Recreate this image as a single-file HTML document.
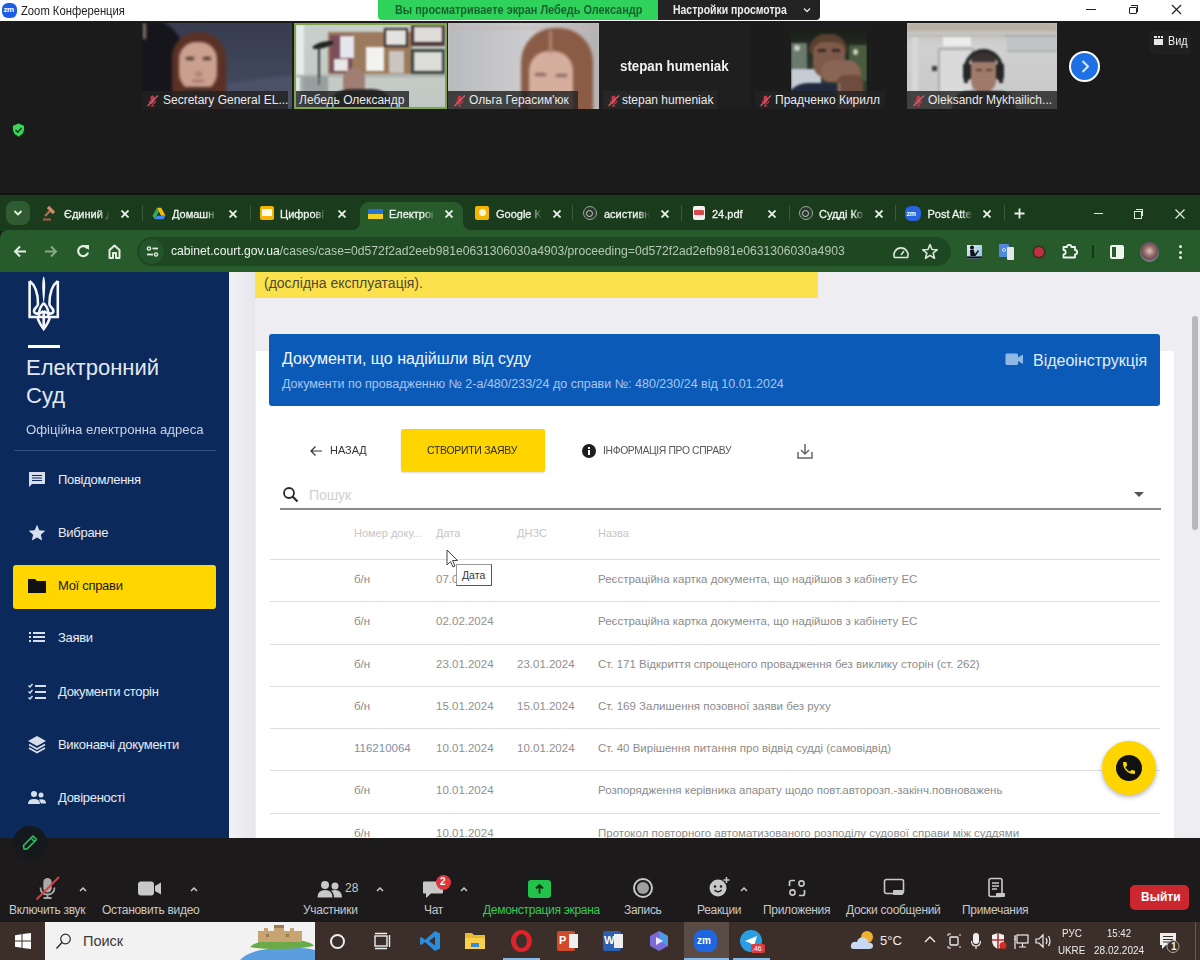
<!DOCTYPE html>
<html><head><meta charset="utf-8">
<style>
*{margin:0;padding:0;box-sizing:border-box}
html,body{width:1200px;height:960px;overflow:hidden;background:#1b1b1b;font-family:"Liberation Sans",sans-serif;position:relative}
.a{position:absolute}
.t{position:absolute;white-space:nowrap;line-height:1}
</style></head><body>

<!-- ===== Zoom title bar ===== -->
<div class="a" style="left:0;top:0;width:1200px;height:21px;background:#fff"></div>
<div class="a" style="left:2px;top:2.5px;width:15px;height:15px;border-radius:6px;background:#1c5ee6"></div>
<div class="t" style="left:3.5px;top:6px;font-size:8px;color:#fff;font-weight:bold;letter-spacing:-.5px">zm</div>
<div class="t" style="left:21px;top:5px;font-size:12px;color:#222;transform:scaleX(.937);transform-origin:0 0">Zoom Конференция</div>
<div class="a" style="left:378px;top:0;width:280px;height:20px;background:#2fd35b;border-radius:0 0 0 4px"></div>
<div class="t" style="left:395px;top:4px;font-size:12px;color:#17622f;font-weight:bold;transform:scaleX(.908);transform-origin:0 0">Вы просматриваете экран Лебедь Олександр</div>
<div class="a" style="left:658px;top:0;width:162px;height:20px;background:#232323;border-radius:0 0 4px 0"></div>
<div class="t" style="left:673px;top:4px;font-size:12px;color:#eee;font-weight:bold;transform:scaleX(.87);transform-origin:0 0">Настройки просмотра</div>
<svg class="a" style="left:802px;top:6px" width="10" height="8" viewBox="0 0 10 8"><path d="M2 2.5 L5 5.5 L8 2.5" fill="none" stroke="#ddd" stroke-width="1.4"/></svg>
<div class="a" style="left:1086px;top:9px;width:10px;height:1.3px;background:#222"></div>
<div class="a" style="left:1131px;top:5px;width:7px;height:7px;border-top:1.2px solid #222;border-right:1.2px solid #222;border-radius:0 1px 0 0"></div>
<div class="a" style="left:1129px;top:6.5px;width:7.5px;height:7.5px;border:1.2px solid #222;background:#fff;border-radius:1px"></div>
<svg class="a" style="left:1171px;top:4px" width="11" height="11" viewBox="0 0 11 11"><path d="M1 1 L10 10 M10 1 L1 10" stroke="#222" stroke-width="1.2"/></svg>

<!-- ===== Video tiles ===== -->
<!-- tile1 -->
<div class="a" style="left:142px;top:23px;width:150px;height:86px;overflow:hidden;background:#3d4357">
  <div class="a" style="left:0;top:0;width:150px;height:86px;filter:blur(1.5px)">
    <div class="a" style="left:0;top:0;width:150px;height:86px;background:linear-gradient(180deg,#363b4e 0%,#3f4558 50%,#454b5e 100%)"></div>
    <div class="a" style="left:80px;top:56px;width:72px;height:32px;background:#4b5166;transform:skewY(-8deg)"></div>
    <div class="a" style="left:-4px;top:-4px;width:46px;height:96px;background:#16151b;border-radius:0 36px 0 0"></div>
    <div class="a" style="left:1px;top:0;width:3px;height:16px;background:#8a7a70"></div>
    <div class="a" style="left:30px;top:9px;width:54px;height:80px;background:#5a3125;border-radius:26px 26px 6px 6px"></div>
    <div class="a" style="left:37px;top:19px;width:38px;height:50px;background:#cba08e;border-radius:17px 17px 19px 19px"></div>
    <div class="a" style="left:43px;top:64px;width:28px;height:24px;background:#4a2e28"></div>
    <div class="a" style="left:44px;top:34px;width:8px;height:3px;background:#4a3430"></div>
    <div class="a" style="left:61px;top:34px;width:8px;height:3px;background:#4a3430"></div>
    <div class="a" style="left:53px;top:48px;width:7px;height:6px;background:#b08474;border-radius:3px"></div>
    <div class="a" style="left:50px;top:57px;width:12px;height:2px;background:#a06a60"></div>
  </div>
</div>
<!-- tile2 -->
<div class="a" style="left:294px;top:23px;width:153px;height:86px;overflow:hidden;background:#c4ccc8;border:2px solid #82a54a">
  <div class="a" style="left:0;top:0;width:151px;height:84px;filter:blur(1px)">
    <div class="a" style="left:0;top:0;width:151px;height:84px;background:linear-gradient(180deg,#c8d0cc,#c0c8c4)"></div>
    <div class="a" style="left:0;top:0;width:8px;height:84px;background:#e6ecec"></div>
    <div class="a" style="left:32px;top:7px;width:84px;height:42px;background:#9c7a5c"></div>
    <div class="a" style="left:34px;top:10px;width:22px;height:38px;background:#7a4e5a"></div>
    <div class="a" style="left:44px;top:11px;width:14px;height:22px;background:#e6e6ee"></div>
    <div class="a" style="left:38px;top:34px;width:14px;height:12px;background:#e8e8e8"></div>
    <div class="a" style="left:70px;top:22px;width:18px;height:24px;background:#f2f2f0"></div>
    <div class="a" style="left:88px;top:3px;width:24px;height:19px;background:#332e2e"></div>
    <div class="a" style="left:90px;top:5px;width:20px;height:15px;background:#e4e2de"></div>
    <div class="a" style="left:115px;top:0;width:34px;height:21px;background:#4a3636"></div>
    <div class="a" style="left:118px;top:2px;width:28px;height:15px;background:#dedcd8"></div>
    <div class="a" style="left:115px;top:24px;width:34px;height:25px;background:#3c463e"></div>
    <div class="a" style="left:118px;top:27px;width:28px;height:19px;background:#dcdcd8"></div>
    <div class="a" style="left:93px;top:26px;width:15px;height:22px;background:#cac6be"></div>
    <div class="a" style="left:0;top:50px;width:151px;height:2px;background:#a8aca8"></div>
    <div class="a" style="left:16px;top:17px;width:22px;height:6px;background:#222;border-radius:50%;transform:rotate(-15deg)"></div>
    <div class="a" style="left:22px;top:22px;width:2px;height:38px;background:#333"></div>
    <div class="a" style="left:47px;top:43px;width:22px;height:26px;background:#a07e72;border-radius:11px 11px 8px 8px"></div>
    <div class="a" style="left:30px;top:64px;width:70px;height:24px;background:#2e2b2c;border-radius:24px 24px 0 0"></div>
    <div class="a" style="left:4px;top:52px;width:28px;height:30px;background:#7a8484;opacity:.6"></div>
  </div>
</div>
<!-- tile3 -->
<div class="a" style="left:448px;top:23px;width:151px;height:86px;overflow:hidden;background:#c4c4c6">
  <div class="a" style="left:0;top:0;width:151px;height:86px;filter:blur(1.5px)">
    <div class="a" style="left:0;top:0;width:151px;height:86px;background:linear-gradient(90deg,#b9babd,#cdcdcf 55%,#b4b0b0)"></div>
    <div class="a" style="left:0;top:4px;width:151px;height:2px;background:#c8b2b6"></div>
    <div class="a" style="left:73px;top:5px;width:72px;height:86px;background:#8a5c46;border-radius:34px 34px 0 0"></div>
    <div class="a" style="left:81px;top:28px;width:44px;height:60px;background:#d6ae9e;border-radius:20px 20px 0 0"></div>
    <div class="a" style="left:101px;top:8px;width:3px;height:22px;background:#b08470"></div>
    <div class="a" style="left:87px;top:50px;width:11px;height:3px;background:#8a6460"></div>
    <div class="a" style="left:108px;top:51px;width:11px;height:3px;background:#8a6460"></div>
  </div>
</div>
<!-- tile4 -->
<div class="a" style="left:599px;top:23px;width:152px;height:86px;background:#1f1f1f"></div>
<div class="t" style="left:620px;top:59px;font-size:14px;font-weight:bold;color:#f2f2f2;transform:scaleX(.95);transform-origin:0 0">stepan humeniak</div>
<!-- tile5 -->
<div class="a" style="left:752px;top:23px;width:153px;height:86px;background:#1c1c1c"></div>
<div class="a" style="left:791px;top:29px;width:76px;height:80px;overflow:hidden;background:#1c2418">
  <div class="a" style="left:0;top:0;width:76px;height:80px;filter:blur(1.2px)">
    <div class="a" style="left:0;top:0;width:76px;height:80px;background:linear-gradient(180deg,#1a1e18,#28362a 40%,#34442e)"></div>
    <div class="a" style="left:0;top:14px;width:16px;height:32px;background:#6a7a6c"></div>
    <div class="a" style="left:3px;top:16px;width:6px;height:6px;background:#c8d0c8;border-radius:50%"></div>
    <div class="a" style="left:58px;top:16px;width:18px;height:36px;background:#4a5c40"></div>
    <div class="a" style="left:62px;top:20px;width:5px;height:6px;background:#c8d4c0;border-radius:50%"></div>
    <div class="a" style="left:0;top:40px;width:30px;height:24px;background:#c6ccd4"></div>
    <div class="a" style="left:-6px;top:54px;width:70px;height:30px;background:#222a40;border-radius:30px 40px 0 0"></div>
    <div class="a" style="left:18px;top:5px;width:38px;height:20px;background:#5a4030;border-radius:18px 18px 4px 4px"></div>
    <div class="a" style="left:22px;top:13px;width:32px;height:36px;background:#7e5a4a;border-radius:10px 10px 14px 14px"></div>
    <div class="a" style="left:27px;top:20px;width:8px;height:3px;background:#3a2a24"></div>
    <div class="a" style="left:41px;top:20px;width:8px;height:3px;background:#3a2a24"></div>
    <div class="a" style="left:30px;top:31px;width:40px;height:22px;background:#8a6454;border-radius:12px 14px 8px 8px"></div>
    <div class="a" style="left:46px;top:46px;width:26px;height:34px;background:#6e4c3e;border-radius:8px"></div>
    <div class="a" style="left:48px;top:54px;width:1px;height:26px;background:#a0a0a0"></div>
  </div>
</div>
<!-- tile6 -->
<div class="a" style="left:907px;top:23px;width:150px;height:86px;overflow:hidden;background:#c8c8c8">
  <div class="a" style="left:0;top:0;width:150px;height:86px;filter:blur(1.2px)">
    <div class="a" style="left:0;top:0;width:150px;height:86px;background:linear-gradient(180deg,#bcb6ac 0%,#c6c4c0 10%,#d0d0d0 26%,#c8c8c8 100%)"></div>
    <div class="a" style="left:0;top:0;width:150px;height:8px;background:#b8b0a4"></div>
    <div class="a" style="left:0;top:12px;width:150px;height:2px;background:#b8b8b8"></div>
    <div class="a" style="left:36px;top:14px;width:28px;height:9px;background:#ececec"></div>
    <div class="a" style="left:98px;top:12px;width:52px;height:2px;background:#a8a8a8"></div>
    <div class="a" style="left:100px;top:14px;width:50px;height:12px;background:#c0c4c4"></div>
    <div class="a" style="left:100px;top:27px;width:50px;height:2px;background:#a8aaaa"></div>
    <div class="a" style="left:31px;top:25px;width:36px;height:61px;background:#dadada;border:2px solid #acacac;border-bottom:none"></div>
    <div class="a" style="left:25px;top:43px;width:5px;height:5px;background:#404040"></div>
    <div class="a" style="left:5px;top:14px;width:6px;height:72px;background:#d8d8d8"></div>
    <div class="a" style="left:57px;top:26px;width:39px;height:34px;border:4px solid #262626;border-bottom:none;border-radius:20px 20px 0 0"></div>
    <div class="a" style="left:56px;top:40px;width:8px;height:17px;background:#262626;border-radius:3px"></div>
    <div class="a" style="left:89px;top:40px;width:8px;height:17px;background:#262626;border-radius:3px"></div>
    <div class="a" style="left:64px;top:33px;width:25px;height:36px;background:#a07a6a;border-radius:9px 9px 11px 11px"></div>
    <div class="a" style="left:64px;top:30px;width:25px;height:9px;background:#3a3232;border-radius:10px 10px 0 0"></div>
    <div class="a" style="left:69px;top:46px;width:6px;height:2px;background:#5a4038"></div>
    <div class="a" style="left:79px;top:46px;width:6px;height:2px;background:#5a4038"></div>
    <div class="a" style="left:45px;top:68px;width:64px;height:20px;background:#3a3a3c;border-radius:16px 16px 0 0"></div>
  </div>
</div>
<!-- name labels -->
<div class="a" style="left:142px;top:91px;width:146px;height:18px;background:rgba(34,34,34,.82)"></div>
<div class="t" style="left:163px;top:94px;font-size:12px;color:#eaeaea">Secretary General EL...</div>
<div class="a" style="left:296px;top:91px;width:113px;height:16px;background:rgba(34,34,34,.82)"></div>
<div class="t" style="left:299px;top:94px;font-size:12px;color:#eaeaea">Лебедь Олександр</div>
<div class="a" style="left:448px;top:91px;width:130px;height:18px;background:rgba(34,34,34,.82)"></div>
<div class="t" style="left:469px;top:94px;font-size:12px;color:#eaeaea">Ольга Герасим'юк</div>
<div class="a" style="left:603px;top:91px;width:114px;height:18px;background:rgba(40,40,40,.8)"></div>
<div class="t" style="left:622px;top:94px;font-size:12px;color:#eaeaea">stepan humeniak</div>
<div class="a" style="left:755px;top:91px;width:130px;height:18px;background:rgba(34,34,34,.82)"></div>
<div class="t" style="left:775px;top:94px;font-size:12px;color:#eaeaea">Прадченко Кирилл</div>
<div class="a" style="left:907px;top:91px;width:150px;height:18px;background:rgba(34,34,34,.82)"></div>
<div class="t" style="left:928px;top:94px;font-size:12px;color:#eaeaea">Oleksandr Mykhailich...</div>
<svg class="a" style="left:146px;top:94px" width="13" height="13" viewBox="0 0 13 13"><rect x="4.5" y="1.5" width="4" height="7.5" rx="2" fill="#c8364a"/><path d="M3 6.5 Q3 10 6.5 10 Q10 10 10 6.5 M6.5 10 V12 M4.5 12 H8.5" fill="none" stroke="#c8364a" stroke-width="1"/><path d="M1.5 12 L12 1.5" stroke="#d86070" stroke-width="1.2"/></svg>
<svg class="a" style="left:453px;top:94px" width="13" height="13" viewBox="0 0 13 13"><rect x="4.5" y="1.5" width="4" height="7.5" rx="2" fill="#c8364a"/><path d="M3 6.5 Q3 10 6.5 10 Q10 10 10 6.5 M6.5 10 V12 M4.5 12 H8.5" fill="none" stroke="#c8364a" stroke-width="1"/><path d="M1.5 12 L12 1.5" stroke="#d86070" stroke-width="1.2"/></svg>
<svg class="a" style="left:607px;top:94px" width="13" height="13" viewBox="0 0 13 13"><rect x="4.5" y="1.5" width="4" height="7.5" rx="2" fill="#c8364a"/><path d="M3 6.5 Q3 10 6.5 10 Q10 10 10 6.5 M6.5 10 V12 M4.5 12 H8.5" fill="none" stroke="#c8364a" stroke-width="1"/><path d="M1.5 12 L12 1.5" stroke="#d86070" stroke-width="1.2"/></svg>
<svg class="a" style="left:759px;top:94px" width="13" height="13" viewBox="0 0 13 13"><rect x="4.5" y="1.5" width="4" height="7.5" rx="2" fill="#c8364a"/><path d="M3 6.5 Q3 10 6.5 10 Q10 10 10 6.5 M6.5 10 V12 M4.5 12 H8.5" fill="none" stroke="#c8364a" stroke-width="1"/><path d="M1.5 12 L12 1.5" stroke="#d86070" stroke-width="1.2"/></svg>
<svg class="a" style="left:912px;top:94px" width="13" height="13" viewBox="0 0 13 13"><rect x="4.5" y="1.5" width="4" height="7.5" rx="2" fill="#c8364a"/><path d="M3 6.5 Q3 10 6.5 10 Q10 10 10 6.5 M6.5 10 V12 M4.5 12 H8.5" fill="none" stroke="#c8364a" stroke-width="1"/><path d="M1.5 12 L12 1.5" stroke="#d86070" stroke-width="1.2"/></svg>
<!-- next arrow -->
<div class="a" style="left:1069px;top:51px;width:31px;height:31px;border-radius:50%;background:#1f6fe5;border:2.5px solid #fff"></div>
<svg class="a" style="left:1078px;top:58px" width="14" height="17" viewBox="0 0 14 17"><path d="M4.5 3 L10 8.5 L4.5 14" fill="none" stroke="#dceaff" stroke-width="2"/></svg>
<!-- view button -->
<div class="a" style="left:1149px;top:31px;width:42px;height:23px;background:#202020;border-radius:4px"></div>
<div class="a" style="left:1154px;top:36px;width:9px;height:9px;background:#e6e6e6"></div>
<div class="a" style="left:1154px;top:38px;width:9px;height:1px;background:#242424"></div>
<div class="a" style="left:1157px;top:36px;width:1px;height:2px;background:#242424"></div>
<div class="a" style="left:1160px;top:36px;width:1px;height:2px;background:#242424"></div>
<div class="t" style="left:1168px;top:35px;font-size:12px;color:#eee;transform:scaleX(.9);transform-origin:0 0">Вид</div>
<!-- shield -->
<svg class="a" style="left:11px;top:122px" width="15" height="16" viewBox="0 0 15 16"><path d="M7.5 1 L13.5 3.5 L13.5 8 Q13.5 12.5 7.5 15 Q1.5 12.5 1.5 8 L1.5 3.5 Z" fill="#3ad65e" stroke="#0d2a12" stroke-width="1"/><path d="M4.5 8 L6.8 10.2 L10.6 6" fill="none" stroke="#0b3a16" stroke-width="1.6"/></svg>


<!-- ===== Chrome ===== -->
<div class="a" style="left:0;top:193px;width:1200px;height:2px;background:#101410"></div>
<div class="a" style="left:0;top:195px;width:1200px;height:36px;background:#1a3b1c"></div>
<div class="a" style="left:0;top:230px;width:1200px;height:41px;background:#285b2c;border-radius:8px 0 0 0"></div>
<div class="a" style="left:360px;top:202px;width:103px;height:30px;background:#285b2c;border-radius:9px 9px 0 0"></div>
<div class="a" style="left:352px;top:222px;width:8px;height:8px;background:radial-gradient(circle at 0 0,#1a3b1c 8px,#285b2c 8px)"></div>
<div class="a" style="left:463px;top:222px;width:8px;height:8px;background:radial-gradient(circle at 100% 0,#1a3b1c 8px,#285b2c 8px)"></div>
<div class="a" style="left:6px;top:201px;width:24px;height:24px;background:#2e5b31;border-radius:8px"></div>
<svg class="a" style="left:12px;top:208px" width="12" height="10" viewBox="0 0 12 10"><path d="M2.5 3 L6 6.5 L9.5 3" fill="none" stroke="#e8f0e8" stroke-width="1.8"/></svg>
<svg class="a" style="left:42px;top:205px" width="15" height="16" viewBox="0 0 15 16"><path d="M1 14.5 H9" stroke="#a05a48" stroke-width="2.2"/><path d="M3 11 L9 5" stroke="#b86a50" stroke-width="2.4"/><path d="M6 2 L12 8" stroke="#d88a68" stroke-width="3.2"/></svg>
<div class="t" style="left:64px;top:209px;font-size:11px;-webkit-text-stroke:.3px #eef4ee;color:#eef4ee;width:46px;overflow:hidden;-webkit-mask-image:linear-gradient(90deg,#000 75%,transparent)">Єдиний д</div>
<svg class="a" style="left:120.5px;top:210px" width="8" height="8" viewBox="0 0 8 8"><path d="M0.5 0.5 L7.5 7.5 M7.5 0.5 L0.5 7.5" stroke="#eef4ee" stroke-width="1.8"/></svg>
<div class="a" style="left:142px;top:205px;width:1px;height:16px;background:#3a5a3c"></div>
<svg class="a" style="left:151.5px;top:207px" width="14" height="13" viewBox="0 0 16 15"><path d="M5.5 1 H10.5 L15.5 10 H10.5 Z" fill="#fbbc04"/><path d="M5.5 1 L0.5 10 L3 14 L8 5.5 Z" fill="#34a853"/><path d="M3 14 H13 L15.5 10 H5.5 Z" fill="#4285f4"/></svg>
<div class="t" style="left:172px;top:209px;font-size:11px;-webkit-text-stroke:.3px #eef4ee;color:#eef4ee;width:46px;overflow:hidden;-webkit-mask-image:linear-gradient(90deg,#000 75%,transparent)">Домашн</div>
<svg class="a" style="left:228.7px;top:210px" width="8" height="8" viewBox="0 0 8 8"><path d="M0.5 0.5 L7.5 7.5 M7.5 0.5 L0.5 7.5" stroke="#eef4ee" stroke-width="1.8"/></svg>
<div class="a" style="left:250px;top:205px;width:1px;height:16px;background:#3a5a3c"></div>
<div class="a" style="left:259.5px;top:206px;width:14px;height:14px;background:#f4b400;border-radius:2px"></div><div class="a" style="left:261.5px;top:209px;width:10px;height:7px;background:#fff8e8"></div>
<div class="t" style="left:280px;top:209px;font-size:11px;-webkit-text-stroke:.3px #eef4ee;color:#eef4ee;width:46px;overflow:hidden;-webkit-mask-image:linear-gradient(90deg,#000 75%,transparent)">Цифрові</div>
<svg class="a" style="left:337.8px;top:210px" width="8" height="8" viewBox="0 0 8 8"><path d="M0.5 0.5 L7.5 7.5 M7.5 0.5 L0.5 7.5" stroke="#eef4ee" stroke-width="1.8"/></svg>
<div class="a" style="left:368.2px;top:208.5px;width:15px;height:5px;background:#2a6fd8"></div><div class="a" style="left:368.2px;top:213.5px;width:15px;height:5px;background:#f2d21a"></div>
<div class="t" style="left:389px;top:209px;font-size:11px;-webkit-text-stroke:.3px #eef4ee;color:#eef4ee;width:46px;overflow:hidden;-webkit-mask-image:linear-gradient(90deg,#000 75%,transparent)">Електрон</div>
<svg class="a" style="left:444.6px;top:210px" width="8" height="8" viewBox="0 0 8 8"><path d="M0.5 0.5 L7.5 7.5 M7.5 0.5 L0.5 7.5" stroke="#eef4ee" stroke-width="1.8"/></svg>
<div class="a" style="left:475.4px;top:206px;width:14px;height:14px;background:#f4b400;border-radius:2px"></div><div class="a" style="left:478.9px;top:209px;width:7px;height:7px;background:#fff4d0;border-radius:50%"></div>
<div class="t" style="left:496px;top:209px;font-size:11px;-webkit-text-stroke:.3px #eef4ee;color:#eef4ee;width:46px;overflow:hidden;-webkit-mask-image:linear-gradient(90deg,#000 75%,transparent)">Google K</div>
<svg class="a" style="left:552.6px;top:210px" width="8" height="8" viewBox="0 0 8 8"><path d="M0.5 0.5 L7.5 7.5 M7.5 0.5 L0.5 7.5" stroke="#eef4ee" stroke-width="1.8"/></svg>
<div class="a" style="left:572px;top:205px;width:1px;height:16px;background:#3a5a3c"></div>
<div class="a" style="left:582.8px;top:206px;width:14px;height:14px;border-radius:50%;border:1.5px solid #9aa89a;background:#2a3a2a"></div><div class="a" style="left:586.3px;top:209.5px;width:7px;height:7px;border-radius:50%;border:1.5px solid #c8d0c8"></div>
<div class="t" style="left:604px;top:209px;font-size:11px;-webkit-text-stroke:.3px #eef4ee;color:#eef4ee;width:46px;overflow:hidden;-webkit-mask-image:linear-gradient(90deg,#000 75%,transparent)">асистивн</div>
<svg class="a" style="left:661px;top:210px" width="8" height="8" viewBox="0 0 8 8"><path d="M0.5 0.5 L7.5 7.5 M7.5 0.5 L0.5 7.5" stroke="#eef4ee" stroke-width="1.8"/></svg>
<div class="a" style="left:681.4px;top:205px;width:1px;height:16px;background:#3a5a3c"></div>
<div class="a" style="left:692.6px;top:206px;width:12px;height:14px;background:#f4f0f0;border-radius:2px"></div><div class="a" style="left:693.6px;top:210px;width:10px;height:5px;background:#d84a4a;border-radius:1px"></div>
<div class="t" style="left:712px;top:209px;font-size:11px;-webkit-text-stroke:.3px #eef4ee;color:#eef4ee;width:46px;overflow:hidden;-webkit-mask-image:linear-gradient(90deg,#000 75%,transparent)">24.pdf</div>
<svg class="a" style="left:768px;top:210px" width="8" height="8" viewBox="0 0 8 8"><path d="M0.5 0.5 L7.5 7.5 M7.5 0.5 L0.5 7.5" stroke="#eef4ee" stroke-width="1.8"/></svg>
<div class="a" style="left:788.6px;top:205px;width:1px;height:16px;background:#3a5a3c"></div>
<div class="a" style="left:798.8px;top:206px;width:14px;height:14px;border-radius:50%;border:1.5px solid #9aa89a;background:#2a3a2a"></div><div class="a" style="left:802.3px;top:209.5px;width:7px;height:7px;border-radius:50%;border:1.5px solid #c8d0c8"></div>
<div class="t" style="left:819px;top:209px;font-size:11px;-webkit-text-stroke:.3px #eef4ee;color:#eef4ee;width:46px;overflow:hidden;-webkit-mask-image:linear-gradient(90deg,#000 75%,transparent)">Судді Ко</div>
<svg class="a" style="left:875.4px;top:210px" width="8" height="8" viewBox="0 0 8 8"><path d="M0.5 0.5 L7.5 7.5 M7.5 0.5 L0.5 7.5" stroke="#eef4ee" stroke-width="1.8"/></svg>
<div class="a" style="left:894.5px;top:205px;width:1px;height:16px;background:#3a5a3c"></div>
<div class="a" style="left:904.5px;top:206px;width:16px;height:15px;border-radius:6px;background:#2a62e0"></div><div class="t" style="left:906.5px;top:210px;font-size:7px;font-weight:bold;color:#fff;letter-spacing:-.3px">zm</div>
<div class="t" style="left:927.5px;top:209px;font-size:11px;-webkit-text-stroke:.3px #eef4ee;color:#eef4ee;width:45.5px;overflow:hidden;-webkit-mask-image:linear-gradient(90deg,#000 75%,transparent)">Post Atte</div>
<svg class="a" style="left:983px;top:210px" width="8" height="8" viewBox="0 0 8 8"><path d="M0.5 0.5 L7.5 7.5 M7.5 0.5 L0.5 7.5" stroke="#eef4ee" stroke-width="1.8"/></svg>
<div class="a" style="left:1003.7px;top:205px;width:1px;height:16px;background:#3a5a3c"></div>
<svg class="a" style="left:1014px;top:208px" width="11" height="11" viewBox="0 0 11 11"><path d="M5.5 0.5 V10.5 M0.5 5.5 H10.5" stroke="#e8f0e8" stroke-width="1.8"/></svg>
<div class="a" style="left:1094px;top:213px;width:9px;height:1.4px;background:#dde8dd"></div>
<div class="a" style="left:1136px;top:209px;width:7px;height:7px;border-top:1.3px solid #dde8dd;border-right:1.3px solid #dde8dd"></div>
<div class="a" style="left:1134px;top:211px;width:7.5px;height:7.5px;border:1.3px solid #dde8dd;background:#1a3b1c"></div>
<svg class="a" style="left:1175px;top:209px" width="10" height="10" viewBox="0 0 10 10"><path d="M0.5 0.5 L9.5 9.5 M9.5 0.5 L0.5 9.5" stroke="#dde8dd" stroke-width="1.3"/></svg>
<!-- toolbar -->
<svg class="a" style="left:13px;top:245px" width="14" height="13" viewBox="0 0 14 13"><path d="M13 6.5 H2.5 M7 1.5 L2 6.5 L7 11.5" fill="none" stroke="#e4eee0" stroke-width="2"/></svg>
<svg class="a" style="left:44px;top:245px" width="14" height="13" viewBox="0 0 14 13"><path d="M1 6.5 H11.5 M7 1.5 L12 6.5 L7 11.5" fill="none" stroke="#86a886" stroke-width="2"/></svg>
<svg class="a" style="left:76px;top:244px" width="14" height="14" viewBox="0 0 14 14"><path d="M11.5 4.5 A5 5 0 1 0 12 8.5" fill="none" stroke="#e4eee0" stroke-width="2.2"/><path d="M8 1 H13 V6 Z" fill="#e4eee0"/></svg>
<svg class="a" style="left:108px;top:244px" width="13" height="15" viewBox="0 0 13 15"><path d="M1.5 14 V6 L6.5 1.5 L11.5 6 V14 H8 V9 H5 V14 Z" fill="none" stroke="#e4eee0" stroke-width="2" stroke-linejoin="round"/></svg>
<div class="a" style="left:137px;top:237px;width:814px;height:29px;background:#1e4821;border-radius:15px"></div>
<div class="a" style="left:139px;top:239px;width:25px;height:25px;background:#24542a;border-radius:50%"></div>
<svg class="a" style="left:146px;top:246px" width="13" height="11" viewBox="0 0 13 11"><circle cx="3" cy="2.5" r="1.6" fill="none" stroke="#e4eee0" stroke-width="1.4"/><path d="M6.5 2.5 H12" stroke="#e4eee0" stroke-width="1.8"/><circle cx="10" cy="8.5" r="1.6" fill="none" stroke="#e4eee0" stroke-width="1.4"/><path d="M1 8.5 H7" stroke="#e4eee0" stroke-width="1.8"/></svg>
<div class="t" style="left:171px;top:244px;font-size:13px;color:#b6c8b6;transform:scaleX(.936);transform-origin:0 0"><span style="color:#f0f5f0">cabinet.court.gov.ua</span>/cases/case=0d572f2ad2eeb981e0631306030a4903/proceeding=0d572f2ad2efb981e0631306030a4903</div>
<svg class="a" style="left:892px;top:245px" width="18" height="14" viewBox="0 0 18 14"><path d="M2.5 12.5 A7 7 0 1 1 15.5 12.5 Z" fill="none" stroke="#dde8dd" stroke-width="1.6" stroke-linejoin="round"/><path d="M9 10 L12 6" stroke="#dde8dd" stroke-width="1.6"/></svg>
<svg class="a" style="left:921px;top:243px" width="18" height="17" viewBox="0 0 18 17"><path d="M9 1.5 L11 6.5 L16.2 6.8 L12.1 10.1 L13.5 15.3 L9 12.4 L4.5 15.3 L5.9 10.1 L1.8 6.8 L7 6.5 Z" fill="none" stroke="#dde8dd" stroke-width="1.6" stroke-linejoin="round"/></svg>
<div class="a" style="left:967px;top:245px;width:15px;height:14px;background:linear-gradient(135deg,#d8ecf8,#90c0e0)"></div>
<svg class="a" style="left:967px;top:245px" width="15" height="14" viewBox="0 0 15 14"><circle cx="5" cy="2.5" r="2" fill="#111"/><path d="M3 5 L6.5 4.5 L8 9 L11 5 L12 6 L8.5 11 H3.5 Z" fill="#111"/><path d="M0 12.5 H15" stroke="#111" stroke-width="2.2"/></svg>
<div class="a" style="left:999px;top:244px;width:10px;height:13px;background:#5088e0;border-radius:1px"></div>
<div class="a" style="left:1002px;top:248px;width:4px;height:4px;border:1px solid #c8d8f8;border-radius:50%"></div>
<div class="a" style="left:1007px;top:247px;width:7px;height:13px;background:#e0e8e8;border-radius:1px"></div>
<div class="a" style="left:1034px;top:247px;width:10px;height:10px;background:#c03040;border-radius:50%;box-shadow:0 0 2px 1px #3a1818"></div>
<svg class="a" style="left:1062px;top:243px" width="16" height="16" viewBox="0 0 16 16"><path d="M1.5 4 H5 A2.2 2.2 0 0 1 9.4 4 H13 V7 A2.2 2.2 0 0 1 13 11.4 V14.5 H1.5 V11.4 A2.2 2.2 0 0 0 1.5 7 Z" fill="none" stroke="#eef4ee" stroke-width="1.8" stroke-linejoin="round"/></svg>
<div class="a" style="left:1092px;top:245px;width:1.5px;height:13px;background:#103a14"></div>
<div class="a" style="left:1110px;top:245px;width:14px;height:14px;border:2px solid #eef4ee;border-radius:2px"></div>
<div class="a" style="left:1116px;top:246px;width:7px;height:12px;background:#eef4ee"></div>
<div class="a" style="left:1140px;top:242px;width:19px;height:20px;border-radius:50%;background:radial-gradient(circle at 50% 45%,#e0c8c0 0,#a07870 30%,#6a5058 55%,#8a9aa8 80%)"></div>
<div class="a" style="left:1178.5px;top:245px;width:3px;height:3px;background:#eef4ee;border-radius:50%"></div>
<div class="a" style="left:1178.5px;top:250.5px;width:3px;height:3px;background:#eef4ee;border-radius:50%"></div>
<div class="a" style="left:1178.5px;top:256px;width:3px;height:3px;background:#eef4ee;border-radius:50%"></div>

<!-- ===== Page ===== -->
<div class="a" style="left:0;top:271px;width:1200px;height:567px;background:#eeedf1;overflow:hidden">
  <!-- sidebar -->
  <div class="a" style="left:0;top:0;width:229px;height:567px;background:#0b2a5b"></div>
  <div class="a" style="left:229px;top:0;width:26px;height:567px;background:linear-gradient(90deg,#f2f2f6,#e6e6ec)"></div>
  <!-- trident -->
  <svg class="a" style="left:27px;top:4px" width="34" height="56" viewBox="0 0 34 56">
    <g fill="none" stroke="#f4f6fa" stroke-width="2.6" stroke-linejoin="miter">
      <path d="M2.6 6 V42 H30.8 V6"/>
      <path d="M2.6 6 C8 10 11 18 11 29 C11 32 7 33 7 36 C7 39 12 40 16.7 36"/>
      <path d="M30.8 6 C25.4 10 22.4 18 22.4 29 C22.4 32 26.4 33 26.4 36 C26.4 39 21.4 40 16.7 36"/>
      <path d="M16.7 28 C14 31 11 35 12 42 M16.7 28 C19.4 31 22.4 35 21.4 42"/>
      <path d="M10.5 42 C11.5 47 14 50.5 16.7 54 C19.4 50.5 21.9 47 22.9 42"/>
      <path d="M16.7 36 V53"/>
    </g>
    <path d="M16.7 1 C14.6 6 14.8 14 16.7 30 C18.6 14 18.8 6 16.7 1 Z" fill="#f4f6fa"/>
  </svg>
  <div class="a" style="left:28px;top:74px;width:32px;height:2.5px;background:#fff"></div>
  <div class="t" style="left:26px;top:83px;font-size:22px;color:#e2e8f2;line-height:28px">Електронний<br>Суд</div>
  <div class="t" style="left:26px;top:152px;font-size:13.5px;color:#c8d2e4;transform:scaleX(.975);transform-origin:0 0">Офіційна електронна адреса</div>
  <div class="a" style="left:14px;top:179px;width:202px;height:1px;background:#34507a"></div>
  <div class="a" style="left:13px;top:294px;width:203px;height:44px;background:#ffd600;border-radius:3px"></div>
  <svg class="a" style="left:27px;top:199px" width="20" height="20" viewBox="0 0 20 20"><path d="M2 2 H18 V14 H5 L2 17 Z" fill="#d8dfec"/><path d="M5 5.5 H15 M5 8 H15 M5 10.5 H15" stroke="#0b2a5b" stroke-width="1.2"/></svg>
  <div class="t" style="left:58px;top:202px;font-size:13px;color:#e8ecf4;letter-spacing:-.3px">Повідомлення</div>
  <svg class="a" style="left:27px;top:252px" width="20" height="20" viewBox="0 0 24 24"><path fill="#d8dfec" d="M12 17.3l6.2 3.7-1.6-7 5.4-4.7-7.2-.6L12 2 9.2 8.7 2 9.3l5.4 4.7-1.6 7z"/></svg>
  <div class="t" style="left:58px;top:255px;font-size:13px;color:#e8ecf4;letter-spacing:-.3px">Вибране</div>
  <svg class="a" style="left:27px;top:305px" width="20" height="20" viewBox="0 0 20 20"><path d="M1 3 H8 L10 5 H19 V17 H1 Z" fill="#111"/></svg>
  <div class="t" style="left:58px;top:308px;font-size:13px;color:#1a1a1a;letter-spacing:-.3px">Мої справи</div>
  <svg class="a" style="left:27px;top:357px" width="20" height="20" viewBox="0 0 20 20"><path d="M2 5 H4 M2 9 H4 M2 13 H4 M6 5 H18 M6 9 H18 M6 13 H18" stroke="#d8dfec" stroke-width="1.8"/></svg>
  <div class="t" style="left:58px;top:360px;font-size:13px;color:#e8ecf4;letter-spacing:-.3px">Заяви</div>
  <svg class="a" style="left:27px;top:411px" width="20" height="20" viewBox="0 0 20 20"><path d="M1.5 3.5 L3 5 L5.5 2 M1.5 9.5 L3 11 L5.5 8 M1.5 15.5 L3 17 L5.5 14" fill="none" stroke="#d8dfec" stroke-width="1.4"/><path d="M8 4 H19 M8 10 H19 M8 16 H19" stroke="#d8dfec" stroke-width="1.8"/></svg>
  <div class="t" style="left:58px;top:414px;font-size:13px;color:#e8ecf4;letter-spacing:-.3px">Документи сторін</div>
  <svg class="a" style="left:27px;top:464px" width="20" height="20" viewBox="0 0 20 20"><path d="M10 1 L19 6 L10 11 L1 6 Z" fill="#d8dfec"/><path d="M2 9.5 L10 14 L18 9.5 M2 13 L10 17.5 L18 13" fill="none" stroke="#d8dfec" stroke-width="1.8"/></svg>
  <div class="t" style="left:58px;top:467px;font-size:13px;color:#e8ecf4;letter-spacing:-.3px">Виконавчі документи</div>
  <svg class="a" style="left:27px;top:517px" width="20" height="20" viewBox="0 0 20 20"><circle cx="7" cy="6" r="3" fill="#d8dfec"/><circle cx="14" cy="7" r="2.5" fill="#d8dfec"/><path d="M1 16 Q1 11 7 11 Q13 11 13 16 Z M12 11.5 Q19 10.5 19 15.5 H14 Z" fill="#d8dfec"/></svg>
  <div class="t" style="left:58px;top:520px;font-size:13px;color:#e8ecf4;letter-spacing:-.3px">Довіреності</div>
  <!-- main -->
  <div class="a" style="left:255px;top:0;width:563px;height:27px;background:#fbe14b"></div>
  <div class="t" style="left:264px;top:5px;font-size:14px;color:#4e4a36">(дослідна експлуатація).</div>
  <div class="a" style="left:256px;top:80px;width:918px;height:500px;background:#fff"></div>
  <div class="a" style="left:269px;top:63px;width:891px;height:72px;background:#0b5ab8;border-radius:3px"></div>
  <div class="t" style="left:282px;top:80px;font-size:16px;color:#f2f6fc">Документи, що надійшли від суду</div>
  <div class="t" style="left:282px;top:107px;font-size:12.5px;color:#a9c5ee">Документи по провадженню № 2-а/480/233/24 до справи №: 480/230/24 від 10.01.2024</div>
  <svg class="a" style="left:1005px;top:82px" width="19" height="13" viewBox="0 0 19 13"><rect x="0.5" y="0.5" width="12.5" height="11.5" rx="1.5" fill="#90b8e4"/><path d="M13 4.5 L18 1.5 V11 L13 8 Z" fill="#90b8e4"/></svg>
  <div class="t" style="left:1033px;top:81.5px;font-size:16px;color:#e2ecfa">Відеоінструкція</div>
  <!-- actions -->
  <svg class="a" style="left:309px;top:174px" width="14" height="12" viewBox="0 0 14 12"><path d="M13 6 H2 M6.5 1.5 L2 6 L6.5 10.5" fill="none" stroke="#333" stroke-width="1.2"/></svg>
  <div class="t" style="left:329.5px;top:173.5px;font-size:11.5px;color:#333;transform:scaleX(.95);transform-origin:0 0">НАЗАД</div>
  <div class="a" style="left:401px;top:158px;width:144px;height:43px;background:#ffd500;border-radius:2px;box-shadow:0 1px 2px rgba(0,0,0,.15)"></div>
  <div class="t" style="left:427px;top:173.5px;font-size:11.5px;color:#2a2a20;letter-spacing:-.3px;transform:scaleX(.91);transform-origin:0 0">СТВОРИТИ ЗАЯВУ</div>
  <svg class="a" style="left:581px;top:172px" width="16" height="16" viewBox="0 0 16 16"><circle cx="8" cy="8" r="7" fill="#1e1e1e"/><rect x="7" y="7" width="2" height="5" fill="#fff"/><rect x="7" y="4" width="2" height="2" fill="#fff"/></svg>
  <div class="t" style="left:603px;top:173.5px;font-size:11.5px;color:#555;letter-spacing:-.4px;transform:scaleX(.9);transform-origin:0 0">ІНФОРМАЦІЯ ПРО СПРАВУ</div>
  <svg class="a" style="left:796px;top:171px" width="18" height="18" viewBox="0 0 18 18"><path d="M2 10 V16 H16 V10" fill="none" stroke="#666" stroke-width="1.5"/><path d="M9 2 V12 M5 8 L9 12 L13 8" fill="none" stroke="#666" stroke-width="1.5"/></svg>
  <!-- search -->
  <svg class="a" style="left:282px;top:215px" width="18" height="18" viewBox="0 0 18 18"><circle cx="7" cy="7" r="5" fill="none" stroke="#2a2a2a" stroke-width="1.8"/><path d="M10.5 10.5 L15.5 15.5" stroke="#2a2a2a" stroke-width="2.2"/></svg>
  <div class="t" style="left:309px;top:217px;font-size:14px;color:#d0d0d0">Пошук</div>
  <svg class="a" style="left:1134px;top:221px" width="10" height="6" viewBox="0 0 10 6"><path d="M0 0 H10 L5 5 Z" fill="#555"/></svg>
  <div class="a" style="left:280px;top:237px;width:881px;height:1.5px;background:#8a8a8a"></div>
  <!-- table header -->
  <div class="t" style="left:354px;top:257px;font-size:11px;color:#c6c6c6">Номер доку...</div>
  <div class="t" style="left:436px;top:257px;font-size:11px;color:#c6c6c6">Дата</div>
  <div class="t" style="left:517px;top:257px;font-size:11px;color:#c6c6c6">ДНЗС</div>
  <div class="t" style="left:598px;top:257px;font-size:11px;color:#c6c6c6">Назва</div>
  <div class="a" style="left:270px;top:288px;width:890px;height:1px;background:#dedede"></div>
  <div class="t" style="left:354px;top:303.0px;font-size:11.5px;color:#8a8a8a">б/н</div>
  <div class="t" style="left:436px;top:303.0px;font-size:11.5px;color:#909090;width:56px;overflow:hidden">07.02.2024</div>
  <div class="t" style="left:598px;top:303.0px;font-size:11.5px;color:#8c8c8c">Реєстраційна картка документа, що надійшов з кабінету ЕС</div>
  <div class="a" style="left:270px;top:330px;width:890px;height:1px;background:#dedede"></div>
  <div class="t" style="left:354px;top:345.0px;font-size:11.5px;color:#8a8a8a">б/н</div>
  <div class="t" style="left:436px;top:345.0px;font-size:11.5px;color:#909090">02.02.2024</div>
  <div class="t" style="left:598px;top:345.0px;font-size:11.5px;color:#8c8c8c">Реєстраційна картка документа, що надійшов з кабінету ЕС</div>
  <div class="a" style="left:270px;top:372.5px;width:890px;height:1px;background:#dedede"></div>
  <div class="t" style="left:354px;top:387.5px;font-size:11.5px;color:#8a8a8a">б/н</div>
  <div class="t" style="left:436px;top:387.5px;font-size:11.5px;color:#909090">23.01.2024</div>
  <div class="t" style="left:517px;top:387.5px;font-size:11.5px;color:#909090">23.01.2024</div>
  <div class="t" style="left:598px;top:387.5px;font-size:11.5px;color:#8c8c8c">Ст. 171 Відкриття спрощеного провадження без виклику сторін (ст. 262)</div>
  <div class="a" style="left:270px;top:414.5px;width:890px;height:1px;background:#dedede"></div>
  <div class="t" style="left:354px;top:429.5px;font-size:11.5px;color:#8a8a8a">б/н</div>
  <div class="t" style="left:436px;top:429.5px;font-size:11.5px;color:#909090">15.01.2024</div>
  <div class="t" style="left:517px;top:429.5px;font-size:11.5px;color:#909090">15.01.2024</div>
  <div class="t" style="left:598px;top:429.5px;font-size:11.5px;color:#8c8c8c">Ст. 169 Залишення позовної заяви без руху</div>
  <div class="a" style="left:270px;top:457px;width:890px;height:1px;background:#dedede"></div>
  <div class="t" style="left:354px;top:472.0px;font-size:11.5px;color:#7a90a8">116210064</div>
  <div class="t" style="left:436px;top:472.0px;font-size:11.5px;color:#909090">10.01.2024</div>
  <div class="t" style="left:517px;top:472.0px;font-size:11.5px;color:#909090">10.01.2024</div>
  <div class="t" style="left:598px;top:472.0px;font-size:11.5px;color:#8c8c8c">Ст. 40 Вирішення питання про відвід судді (самовідвід)</div>
  <div class="a" style="left:270px;top:499px;width:890px;height:1px;background:#dedede"></div>
  <div class="t" style="left:354px;top:514.0px;font-size:11.5px;color:#8a8a8a">б/н</div>
  <div class="t" style="left:436px;top:514.0px;font-size:11.5px;color:#909090">10.01.2024</div>
  <div class="t" style="left:598px;top:514.0px;font-size:11.5px;color:#8c8c8c">Розпорядження керівника апарату щодо повт.авторозп.-закінч.повноважень</div>
  <div class="a" style="left:270px;top:541.5px;width:890px;height:1px;background:#dedede"></div>
  <div class="t" style="left:354px;top:556.5px;font-size:11.5px;color:#8a8a8a">б/н</div>
  <div class="t" style="left:436px;top:556.5px;font-size:11.5px;color:#909090">10.01.2024</div>
  <div class="t" style="left:598px;top:556.5px;font-size:11.5px;color:#8c8c8c">Протокол повторного автоматизованого розподілу судової справи між суддями</div>
  <!-- cursor + tooltip -->
  <div class="a" style="left:456px;top:292.5px;width:36px;height:22.5px;background:#fff;border:1px solid #555;border-top-color:#999;border-left-color:#999"></div>
  <div class="t" style="left:462px;top:299px;font-size:10.5px;color:#333">Дата</div>
  <svg class="a" style="left:446px;top:278px" width="13" height="20" viewBox="0 0 13 20"><path d="M1 1 V16 L4.5 12.5 L7 18 L9 17 L6.5 11.5 L11.5 11.5 Z" fill="#fff" stroke="#444" stroke-width="1"/></svg>
  <!-- scrollbar -->
  <div class="a" style="left:1192px;top:45px;width:6px;height:214px;background:#b8b8bc;border-radius:3px"></div>
  <!-- FAB -->
  <div class="a" style="left:1102px;top:470px;width:54px;height:54px;border-radius:50%;background:#ffd500;box-shadow:0 2px 5px rgba(0,0,0,.3)"></div>
  <div class="a" style="left:1116px;top:484px;width:26px;height:26px;border-radius:50%;background:#111"></div>
  <svg class="a" style="left:1121px;top:489px" width="16" height="16" viewBox="0 0 24 24"><path fill="#ffd500" d="M6.6 10.8c1.4 2.8 3.8 5.1 6.6 6.6l2.2-2.2c.3-.3.7-.4 1-.2 1.1.4 2.3.6 3.6.6.6 0 1 .4 1 1V20c0 .6-.4 1-1 1C10.6 21 3 13.4 3 4c0-.6.4-1 1-1h3.5c.6 0 1 .4 1 1 0 1.3.2 2.5.6 3.6.1.3 0 .7-.2 1L6.6 10.8z"/></svg>
  <!-- pen circle (zoom annotation) -->
</div>


<div class="a" style="left:0;top:271px;width:1200px;height:1px;background:#285b2c"></div>
<!-- ===== Zoom bottom toolbar ===== -->
<div class="a" style="left:0;top:838px;width:1200px;height:84px;background:#1c1a1a"></div>
<div class="a" style="left:13px;top:826px;width:34px;height:34px;border-radius:50%;background:#15181d"></div>
<svg class="a" style="left:20px;top:833px" width="20" height="20" viewBox="0 0 20 20"><path d="M4 16 L3.5 12.5 L13 3 L16.5 6.5 L7 16 Z M11 5 L14.5 8.5" fill="none" stroke="#2fc25a" stroke-width="1.6" stroke-linejoin="round"/></svg>
<!-- mic -->
<svg class="a" style="left:35px;top:875px" width="26" height="26" viewBox="0 0 26 26"><rect x="8.3" y="3" width="8.4" height="14.5" rx="4.2" fill="#a8a8a8"/><path d="M5.5 12.5 Q5.5 19.5 12.5 19.5 Q19.5 19.5 19.5 12.5 M12.5 19.5 V22.5 M8.5 23 H16.5" fill="none" stroke="#a8a8a8" stroke-width="1.8"/><path d="M1.5 24.5 L24 2" stroke="#c9474d" stroke-width="1.8"/></svg>
<svg class="a" style="left:78px;top:886px" width="10" height="7" viewBox="0 0 10 7"><path d="M2 5 L5 2 L8 5" fill="none" stroke="#ccc" stroke-width="1.5"/></svg>
<div class="t" style="left:9px;top:904px;font-size:12px;color:#c8c8c8;letter-spacing:-.3px">Включить звук</div>
<!-- video -->
<svg class="a" style="left:137px;top:880px" width="26" height="17" viewBox="0 0 26 17"><rect x="1" y="1.5" width="16" height="14" rx="3" fill="#c8c8c8"/><path d="M18 6 L24 2.5 V14.5 L18 11 Z" fill="#c8c8c8"/></svg>
<svg class="a" style="left:189px;top:886px" width="10" height="7" viewBox="0 0 10 7"><path d="M2 5 L5 2 L8 5" fill="none" stroke="#ccc" stroke-width="1.5"/></svg>
<div class="t" style="left:102px;top:904px;font-size:12px;color:#c8c8c8;letter-spacing:-.3px">Остановить видео</div>
<!-- participants -->
<svg class="a" style="left:317px;top:880px" width="27" height="18" viewBox="0 0 27 18"><circle cx="8" cy="5" r="4" fill="#c8c8c8"/><circle cx="18" cy="6" r="3.5" fill="#c8c8c8"/><path d="M0.5 17.5 Q0.5 10 8 10 Q15.5 10 15.5 17.5 Z" fill="#c8c8c8"/><path d="M14 10.5 Q16 10 18 10 Q25 10 25 17.5 H17 Q17 13 14 10.5 Z" fill="#c8c8c8"/></svg>
<div class="t" style="left:345px;top:882px;font-size:12px;color:#c8c8c8">28</div>
<svg class="a" style="left:375px;top:886px" width="10" height="7" viewBox="0 0 10 7"><path d="M2 5 L5 2 L8 5" fill="none" stroke="#ccc" stroke-width="1.5"/></svg>
<div class="t" style="left:303px;top:904px;font-size:12px;color:#c8c8c8;letter-spacing:-.3px">Участники</div>
<!-- chat -->
<svg class="a" style="left:422px;top:880px" width="22" height="19" viewBox="0 0 22 19"><path d="M2 1.5 H20 Q21 1.5 21 2.5 V12.5 Q21 13.5 20 13.5 H9 L4 18 V13.5 H2 Q1 13.5 1 12.5 V2.5 Q1 1.5 2 1.5 Z" fill="#c8c8c8"/></svg>
<div class="a" style="left:436px;top:875px;width:15px;height:15px;border-radius:50%;background:#e0353a"></div>
<div class="t" style="left:440px;top:877px;font-size:10px;font-weight:bold;color:#fff">2</div>
<svg class="a" style="left:459px;top:886px" width="10" height="7" viewBox="0 0 10 7"><path d="M2 5 L5 2 L8 5" fill="none" stroke="#ccc" stroke-width="1.5"/></svg>
<div class="t" style="left:424px;top:904px;font-size:12px;color:#c8c8c8;letter-spacing:-.3px">Чат</div>
<!-- share -->
<div class="a" style="left:528px;top:880px;width:23px;height:18px;background:#22c34a;border-radius:3px"></div>
<svg class="a" style="left:534px;top:883px" width="11" height="12" viewBox="0 0 11 12"><path d="M5.5 10.5 V3 M2 5.5 L5.5 2 L9 5.5" fill="none" stroke="#0d2a12" stroke-width="1.8"/></svg>
<div class="t" style="left:483px;top:904px;font-size:12px;color:#39c957;letter-spacing:-.3px">Демонстрация экрана</div>
<!-- record -->
<div class="a" style="left:633px;top:878px;width:20px;height:20px;border-radius:50%;border:2px solid #c8c8c8"></div>
<div class="a" style="left:637px;top:882px;width:12px;height:12px;border-radius:50%;background:#a0a0a0"></div>
<div class="t" style="left:624px;top:904px;font-size:12px;color:#c8c8c8;letter-spacing:-.3px">Запись</div>
<!-- reactions -->
<svg class="a" style="left:707px;top:876px" width="24" height="22" viewBox="0 0 24 22"><circle cx="11" cy="12" r="8.5" fill="#c8c8c8"/><circle cx="8" cy="10.5" r="1.2" fill="#1c1a1a"/><circle cx="14" cy="10.5" r="1.2" fill="#1c1a1a"/><path d="M7.5 14 Q11 17.5 14.5 14" fill="none" stroke="#1c1a1a" stroke-width="1.4"/><path d="M19.5 1 V7 M16.5 4 H22.5" stroke="#c8c8c8" stroke-width="1.5"/></svg>
<svg class="a" style="left:739px;top:886px" width="10" height="7" viewBox="0 0 10 7"><path d="M2 5 L5 2 L8 5" fill="none" stroke="#ccc" stroke-width="1.5"/></svg>
<div class="t" style="left:697px;top:904px;font-size:12px;color:#c8c8c8;letter-spacing:-.3px">Реакции</div>
<!-- apps -->
<svg class="a" style="left:787px;top:878px" width="20" height="20" viewBox="0 0 20 20"><path d="M2.5 8 V4.5 Q2.5 2.5 4.5 2.5 H8 M17.5 12 V15.5 Q17.5 17.5 15.5 17.5 H12" fill="none" stroke="#c8c8c8" stroke-width="1.7"/><circle cx="14.5" cy="5.5" r="2.6" fill="none" stroke="#c8c8c8" stroke-width="1.6"/><circle cx="5.5" cy="14.5" r="2.6" fill="none" stroke="#c8c8c8" stroke-width="1.6"/></svg>
<div class="t" style="left:763px;top:904px;font-size:12px;color:#c8c8c8;letter-spacing:-.3px">Приложения</div>
<!-- whiteboards -->
<svg class="a" style="left:883px;top:878px" width="22" height="20" viewBox="0 0 22 20"><rect x="1.5" y="1.5" width="19" height="14" rx="2" fill="none" stroke="#c8c8c8" stroke-width="1.6"/><rect x="10" y="12" width="10" height="5" rx="1" fill="#c8c8c8"/></svg>
<div class="t" style="left:846px;top:904px;font-size:12px;color:#c8c8c8;letter-spacing:-.3px">Доски сообщений</div>
<!-- notes -->
<svg class="a" style="left:986px;top:877px" width="20" height="22" viewBox="0 0 20 22"><rect x="3" y="1.5" width="13" height="18" rx="2" fill="none" stroke="#c8c8c8" stroke-width="1.6"/><path d="M6 6 H13 M6 9 H13 M6 12 H11" stroke="#c8c8c8" stroke-width="1.3"/><rect x="10" y="16" width="9" height="4" rx="1" fill="#c8c8c8"/></svg>
<div class="t" style="left:962px;top:904px;font-size:12px;color:#c8c8c8;letter-spacing:-.3px">Примечания</div>
<!-- leave -->
<div class="a" style="left:1130px;top:885px;width:59px;height:25px;background:#cc262e;border-radius:5px"></div>
<div class="t" style="left:1141px;top:891px;font-size:12px;font-weight:bold;color:#fff">Выйти</div>

<!-- ===== Taskbar ===== -->
<div class="a" style="left:0;top:922px;width:1200px;height:38px;background:#3c2f29"></div>
<svg class="a" style="left:15px;top:933px" width="16" height="16" viewBox="0 0 16 16"><path d="M0 2.2 L6.5 1.3 V7.5 H0 Z M7.5 1.1 L16 0 V7.5 H7.5 Z M0 8.5 H6.5 V14.7 L0 13.8 Z M7.5 8.5 H16 V16 L7.5 14.9 Z" fill="#fff"/></svg>
<div class="a" style="left:45px;top:922px;width:270px;height:38px;background:#f2f2f2"></div>
<svg class="a" style="left:55px;top:932px" width="18" height="20" viewBox="0 0 18 20"><circle cx="10.5" cy="7" r="4.8" fill="none" stroke="#2a2a2a" stroke-width="1.2"/><path d="M7 10.5 L1.5 16.5" stroke="#2a2a2a" stroke-width="1.4"/></svg>
<div class="t" style="left:83px;top:934px;font-size:14.5px;color:#3a3a3a">Поиск</div>
<svg class="a" style="left:240px;top:922px" width="75" height="38" viewBox="0 0 75 38"><path d="M0 38 Q10 27 40 26 Q65 25 75 28 V38 Z" fill="#5a9ee0"/><path d="M10 25 Q20 16 45 17 Q70 18 74 24 Q60 27 40 27 Q20 27 10 25 Z" fill="#6aaa48"/><path d="M18 20 V9 H24 V6 H28 V9 H34 V3 H44 V9 H50 V6 H54 V9 H62 V20 Z" fill="#c8a472"/><path d="M34 3 H44 V6 H34 Z M46 12 H49 V15 H46 Z M26 12 H29 V15 H26 Z" fill="#9a7a50"/></svg>
<div class="a" style="left:330px;top:934px;width:15px;height:15px;border-radius:50%;border:2px solid #eee"></div>
<svg class="a" style="left:373px;top:932px" width="18" height="18" viewBox="0 0 18 18"><rect x="2" y="4" width="12" height="10" fill="none" stroke="#eee" stroke-width="1.4"/><path d="M2 1.5 H14 M2 16.5 H14 M16.5 3 V15" stroke="#eee" stroke-width="1.4"/></svg>
<svg class="a" style="left:419px;top:930px" width="22" height="22" viewBox="0 0 22 22"><path d="M16 1 L21 3.5 V18.5 L16 21 L6 12 L2.5 15 L1 14 V8 L2.5 7 L6 10 Z M16 6.5 L10 11 L16 15.5 Z" fill="#2a8ee0"/></svg>
<svg class="a" style="left:464px;top:931px" width="22" height="20" viewBox="0 0 22 20"><path d="M1 2 H8 L10 4 H21 V18 H1 Z" fill="#e8b830"/><rect x="1" y="7" width="20" height="11" fill="#f8d04a"/><rect x="7" y="12" width="8" height="4" fill="#3a8ad8"/></svg>
<div class="a" style="left:511px;top:930px;width:21px;height:22px;border-radius:50%;border:4px solid #e0222a;border-left-width:5px;border-right-width:5px"></div>
<div class="a" style="left:503px;top:958px;width:37px;height:2px;background:#86b8e8"></div>
<div class="a" style="left:557px;top:931px;width:18px;height:20px;background:#d24a2a;border-radius:2px"></div>
<div class="a" style="left:569px;top:934px;width:9px;height:14px;background:#f0f0f0"></div>
<div class="t" style="left:559px;top:935px;font-size:11px;font-weight:bold;color:#fff">P</div>
<div class="a" style="left:603px;top:931px;width:18px;height:20px;background:#2b5fb0;border-radius:2px"></div>
<div class="a" style="left:614px;top:934px;width:9px;height:14px;background:#f0f0f0"></div>
<div class="t" style="left:604px;top:935px;font-size:11px;font-weight:bold;color:#fff">W</div>
<svg class="a" style="left:648px;top:930px" width="22" height="22" viewBox="0 0 22 22"><path d="M11 1 L20 6 V16 L11 21 L2 16 V6 Z" fill="#7a6ad8"/><path d="M11 1 L20 6 V16 L11 11 Z" fill="#4a9ae8"/><path d="M8 7 L15 11 L8 15 Z" fill="#f0e8ff"/></svg>
<div class="a" style="left:684px;top:922px;width:45px;height:38px;background:#5a4b45"></div>
<div class="a" style="left:684px;top:958px;width:45px;height:2px;background:#86b8e8"></div>
<div class="a" style="left:694px;top:930px;width:23px;height:22px;border-radius:8px;background:#2066e0"></div>
<div class="t" style="left:697px;top:936px;font-size:10px;font-weight:bold;color:#fff">zm</div>
<div class="a" style="left:740px;top:930px;width:22px;height:22px;border-radius:50%;background:#2a9ee0"></div>
<svg class="a" style="left:744px;top:935px" width="14" height="12" viewBox="0 0 14 12"><path d="M1 6 L13 1 L10 11 L6 8 Z" fill="#fff"/></svg>
<div class="a" style="left:751px;top:944px;width:14px;height:9px;background:#e03a3a;border-radius:2px"></div>
<div class="t" style="left:752px;top:945px;font-size:7px;color:#fff">.46</div>
<div class="a" style="left:733px;top:958px;width:37px;height:2px;background:#86b8e8"></div>
<svg class="a" style="left:850px;top:929px" width="26" height="22" viewBox="0 0 26 22"><circle cx="17" cy="8" r="6" fill="#f0b030"/><path d="M4 20 Q0 20 1 16 Q2 12 7 13 Q8 8 13 8.5 Q18 9 18.5 13.5 Q23 13.5 23 17 Q23 20 19 20 Z" fill="#c8d8f0"/></svg>
<div class="t" style="left:880px;top:934px;font-size:13px;color:#eee">5°C</div>
<svg class="a" style="left:924px;top:935px" width="12" height="8" viewBox="0 0 12 8"><path d="M1 7 L6 2 L11 7" fill="none" stroke="#eee" stroke-width="1.4"/></svg>
<svg class="a" style="left:947px;top:933px" width="14" height="16" viewBox="0 0 14 16"><rect x="3" y="4" width="8" height="8" rx="1" fill="none" stroke="#eee" stroke-width="1.3"/><path d="M1 3 V1 H4 M1 13 V15 H4 M13 3 V1 M13 13 V15" fill="none" stroke="#eee" stroke-width="1"/></svg>
<svg class="a" style="left:970px;top:932px" width="12" height="18" viewBox="0 0 12 18"><rect x="3" y="1" width="6" height="11" rx="3" fill="#eee"/><path d="M1.5 9 Q1.5 14 6 14 Q10.5 14 10.5 9 M6 14 V17" fill="none" stroke="#eee" stroke-width="1.2"/></svg>
<svg class="a" style="left:991px;top:932px" width="16" height="18" viewBox="0 0 16 18"><path d="M7 1 L13 3 V9 Q13 14 7 17 Q1 14 1 9 V3 Z" fill="#f0f0f0"/><path d="M7 1 V17 M1 8 H13" stroke="#c02a2a" stroke-width="1.6"/><circle cx="12" cy="13.5" r="3.5" fill="#d02a2a"/></svg>
<svg class="a" style="left:1013px;top:933px" width="16" height="16" viewBox="0 0 16 16"><rect x="4" y="2" width="11" height="8" fill="none" stroke="#eee" stroke-width="1.2"/><path d="M9.5 10 V14 M6 14 H13 M1 3 H3 M1 6 H3 M2 3 V16" stroke="#eee" stroke-width="1.2"/></svg>
<svg class="a" style="left:1035px;top:933px" width="18" height="16" viewBox="0 0 18 16"><path d="M1 6 H4 L8 2 V14 L4 10 H1 Z" fill="none" stroke="#eee" stroke-width="1.2"/><path d="M11 5 Q13 8 11 11 M13.5 3 Q16.5 8 13.5 13" fill="none" stroke="#eee" stroke-width="1.2"/></svg>
<div class="t" style="left:1062px;top:928px;font-size:11px;color:#eee;transform:scaleX(.9);transform-origin:0 0">РУС</div>
<div class="t" style="left:1058px;top:945px;font-size:11px;color:#eee;transform:scaleX(.89);transform-origin:0 0">UKRE</div>
<div class="t" style="left:1107px;top:928px;font-size:11px;color:#eee;transform:scaleX(.87);transform-origin:0 0">15:42</div>
<div class="t" style="left:1094px;top:945px;font-size:11px;color:#eee;transform:scaleX(.91);transform-origin:0 0">28.02.2024</div>
<svg class="a" style="left:1159px;top:932px" width="22" height="22" viewBox="0 0 22 22"><path d="M1 1 H17 V13 H7 L3 17 V13 H1 Z" fill="#eee"/><path d="M4 4.5 H14 M4 7.5 H14 M4 10 H11" stroke="#3c2f29" stroke-width="1.2"/><circle cx="14" cy="14.5" r="6" fill="#3c2f29" stroke="#aaa" stroke-width="1"/></svg>
<div class="t" style="left:1171px;top:942px;font-size:10px;color:#eee;font-weight:bold">1</div>
<div class="a" style="left:1195px;top:922px;width:1px;height:38px;background:#6a5a54"></div>

</body></html>
